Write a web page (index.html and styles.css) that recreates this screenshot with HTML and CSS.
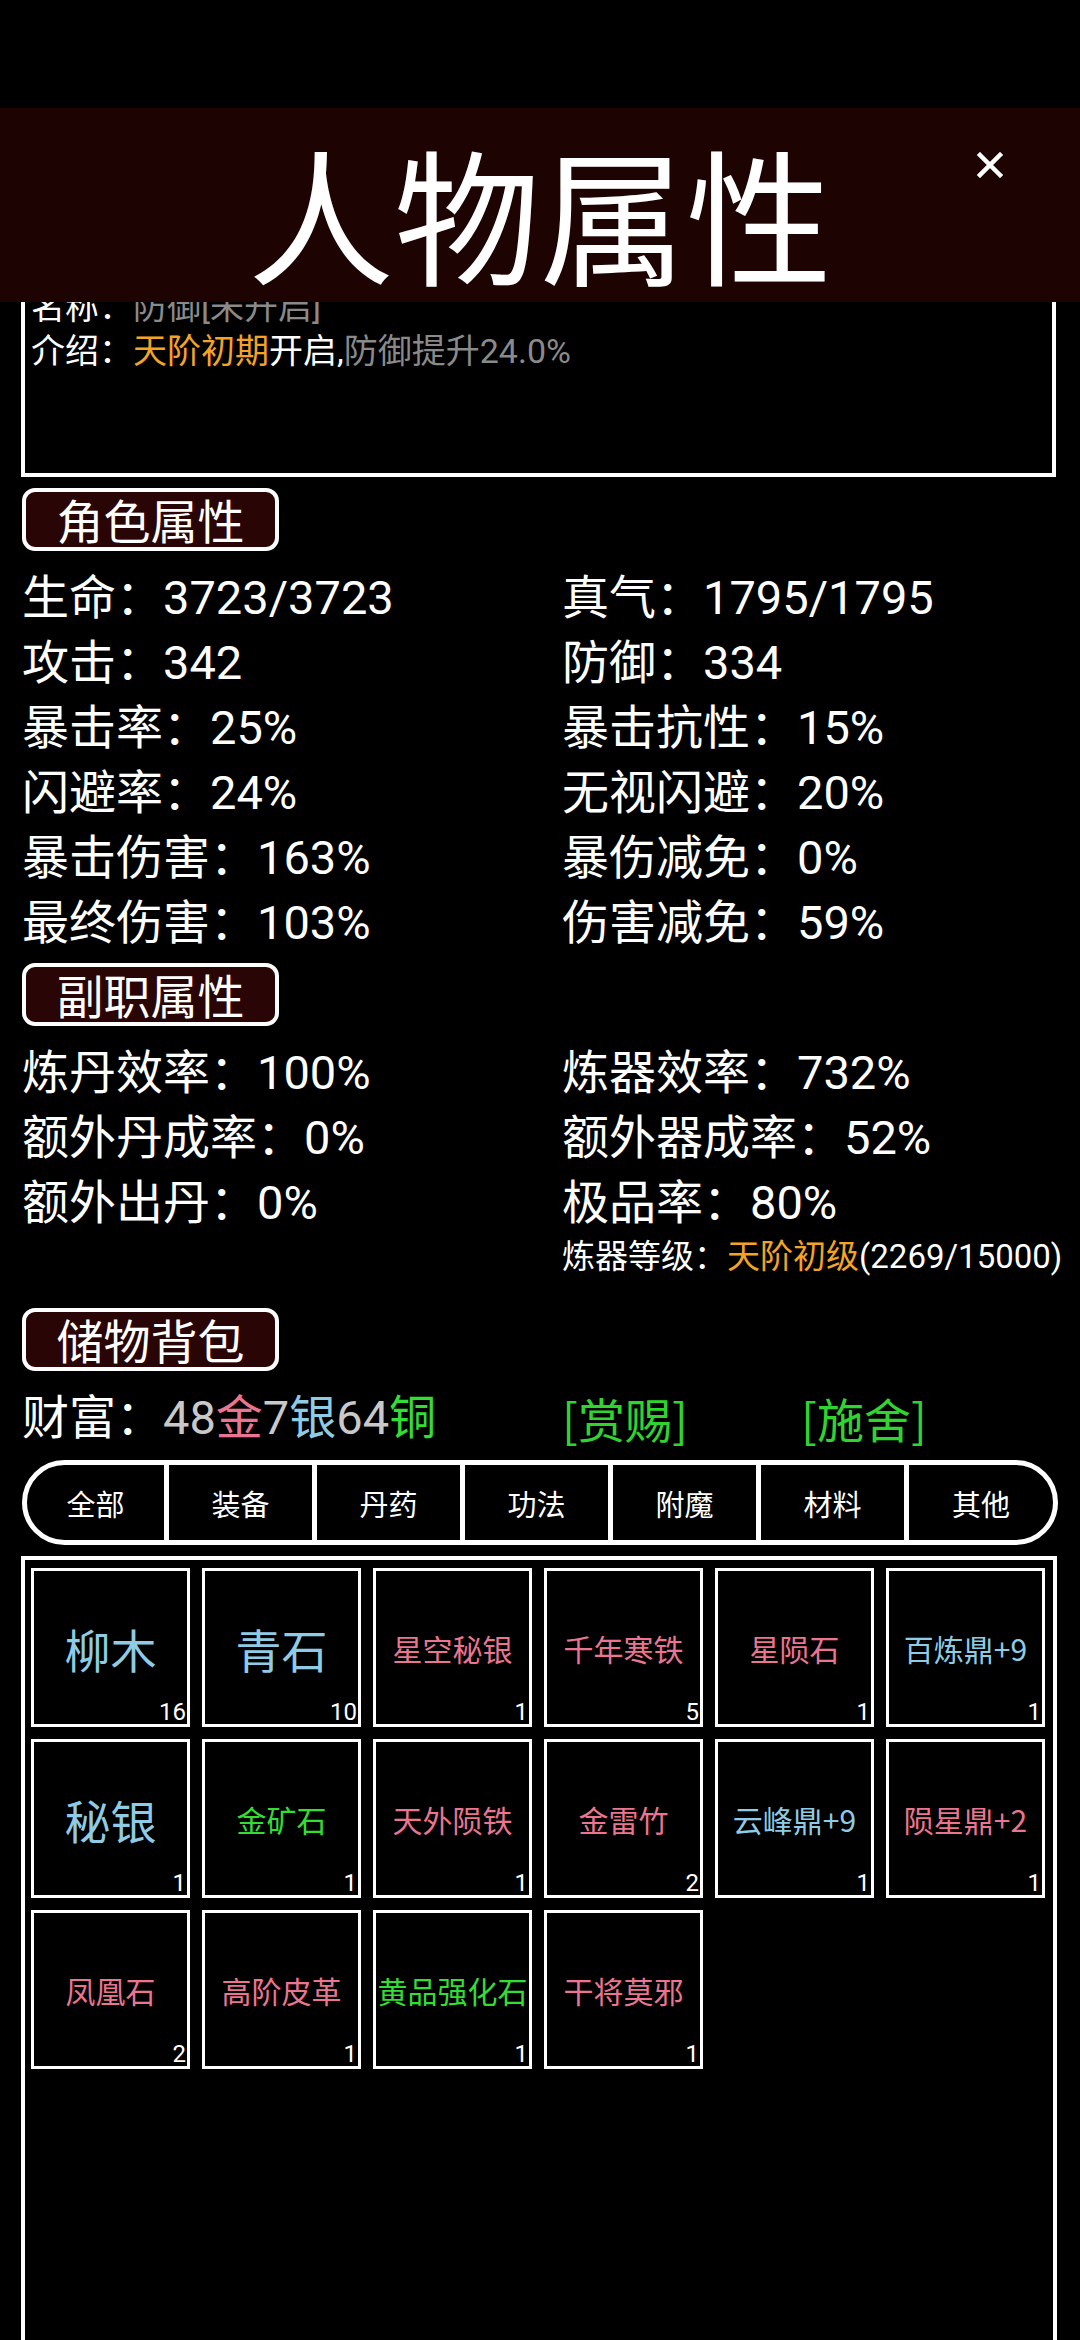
FILE: index.html
```html
<!DOCTYPE html>
<html lang="zh-CN">
<head>
<meta charset="utf-8">
<title>人物属性</title>
<link rel="stylesheet" href="styles.css">
</head>
<body>
<div class="screen">
  <header class="title-bar">
    <h1 class="title">人物属性</h1>
    <button class="close" aria-label="关闭">
      <svg viewBox="0 0 26 26" width="26" height="26"><path d="M3 3 L23 23 M23 3 L3 23" stroke="#fff" stroke-width="4.5" stroke-linecap="square" fill="none"/></svg>
    </button>
  </header>

  <main class="content">
    <section class="info-box">
      <p class="info-line"><span class="c-white">名称：</span><span class="c-grey">防御[未开启]</span></p>
      <p class="info-line"><span class="c-white">介绍：</span><span class="c-orange">天阶初期</span><span class="c-white">开启,</span><span class="c-grey">防御提升24.0%</span></p>
    </section>

    <div class="section-label label-role">角色属性</div>
    <div class="stats stats-role">
      <div>生命：3723/3723</div><div>真气：1795/1795</div>
      <div>攻击：342</div><div>防御：334</div>
      <div>暴击率：25%</div><div>暴击抗性：15%</div>
      <div>闪避率：24%</div><div>无视闪避：20%</div>
      <div>暴击伤害：163%</div><div>暴伤减免：0%</div>
      <div>最终伤害：103%</div><div>伤害减免：59%</div>
    </div>

    <div class="section-label label-sub">副职属性</div>
    <div class="stats stats-sub">
      <div>炼丹效率：100%</div><div>炼器效率：732%</div>
      <div>额外丹成率：0%</div><div>额外器成率：52%</div>
      <div>额外出丹：0%</div><div>极品率：80%</div>
      <div class="level">炼器等级：<span class="c-orange">天阶初级</span>(2269/15000)</div>
    </div>

    <div class="section-label label-bag">储物背包</div>
    <div class="wealth">
      <div>财富：<span class="c-silver">48</span><span class="c-pink">金</span><span class="c-silver">7</span><span class="c-blue">银</span><span class="c-silver">64</span><span class="c-green">铜</span></div>
      <div class="c-btn">[赏赐]</div>
      <div class="c-btn">[施舍]</div>
    </div>

    <nav class="tabs">
      <div class="tab">全部</div>
      <div class="tab">装备</div>
      <div class="tab">丹药</div>
      <div class="tab">功法</div>
      <div class="tab">附魔</div>
      <div class="tab">材料</div>
      <div class="tab">其他</div>
    </nav>

    <section class="bag">
      <div class="grid">
        <div class="cell"><span class="name big c-blue">柳木</span><span class="count">16</span></div>
        <div class="cell"><span class="name big c-blue">青石</span><span class="count">10</span></div>
        <div class="cell"><span class="name c-pink">星空秘银</span><span class="count">1</span></div>
        <div class="cell"><span class="name c-pink">千年寒铁</span><span class="count">5</span></div>
        <div class="cell"><span class="name c-pink">星陨石</span><span class="count">1</span></div>
        <div class="cell"><span class="name c-blue">百炼鼎+9</span><span class="count">1</span></div>
        <div class="cell"><span class="name big c-blue">秘银</span><span class="count">1</span></div>
        <div class="cell"><span class="name c-green">金矿石</span><span class="count">1</span></div>
        <div class="cell"><span class="name c-pink">天外陨铁</span><span class="count">1</span></div>
        <div class="cell"><span class="name c-pink">金雷竹</span><span class="count">2</span></div>
        <div class="cell"><span class="name c-blue">云峰鼎+9</span><span class="count">1</span></div>
        <div class="cell"><span class="name c-pink">陨星鼎+2</span><span class="count">1</span></div>
        <div class="cell"><span class="name c-pink">凤凰石</span><span class="count">2</span></div>
        <div class="cell"><span class="name c-pink">高阶皮革</span><span class="count">1</span></div>
        <div class="cell"><span class="name c-green">黄品强化石</span><span class="count">1</span></div>
        <div class="cell"><span class="name c-pink">干将莫邪</span><span class="count">1</span></div>
      </div>
    </section>
  </main>
</div>
</body>
</html>
```

FILE: styles.css
```css
* { box-sizing: border-box; }

html, body {
  margin: 0;
  padding: 0;
  background: #000;
}

body {
  width: 1080px;
  height: 2340px;
  overflow: hidden;
  font-family: Roboto, "Noto Sans CJK SC", "Noto Sans", sans-serif;
  color: #fff;
}

.screen {
  position: relative;
  width: 1080px;
  height: 2340px;
  overflow: hidden;
  background: #000;
}

/* header overlays scrolled content */
.title-bar {
  position: absolute;
  top: 108px;
  left: 0;
  right: 0;
  height: 194px;
  background: #1e0303;
  z-index: 5;
  display: flex;
  align-items: center;
  justify-content: center;
}

.title {
  margin: 0;
  padding-top: 12px;
  font-family: "Noto Sans CJK SC", sans-serif;
  font-weight: 400;
  font-size: 146px;
  line-height: 1;
  color: #fff;
}

.close {
  position: absolute;
  left: 977px;
  top: 44px;
  width: 26px;
  height: 26px;
  padding: 0;
  border: 0;
  background: transparent;
  display: block;
}
.close svg { display: block; }

.content {
  padding: 270px 0 0 22px;
}

.info-box {
  width: 1035px;
  height: 207px;
  border: 4px solid #fff;
  padding: 11px 0 0 6px;
  margin-left: -1px;
}

.info-line {
  margin: 0;
  font-size: 34px;
  line-height: 44px;
  white-space: nowrap;
}

.c-white { color: #fff; }
.c-grey { color: #8a8a8a; }
.c-orange { color: #f4a425; }
.c-silver { color: #c9c9c9; }
.c-pink { color: #ea7590; }
.c-blue { color: #8fcbe4; }
.c-green { color: #33dd33; }
.c-btn {
  color: #2fd42f;
  font-family: "Noto Sans CJK SC", sans-serif;
}

.section-label {
  width: 257px;
  height: 63px;
  border: 4px solid #fff;
  border-radius: 13px;
  background: #2a0505;
  display: flex;
  align-items: center;
  justify-content: center;
  font-family: "Noto Sans CJK SC", sans-serif;
  font-size: 47px;
  line-height: 1;
  padding-bottom: 2px;
}

.label-role { margin-top: 11px; }
.label-sub { margin-top: 8px; }
.label-bag { margin-top: 29px; }

.stats {
  display: grid;
  grid-template-columns: 540px 1fr;
  font-size: 47px;
  line-height: 65px;
  margin-top: 14px;
  white-space: nowrap;
}

.stats .level {
  grid-column: 2;
  font-size: 33px;
  line-height: 44px;
}

.wealth {
  display: grid;
  grid-template-columns: 540px 239px auto;
  font-size: 47px;
  line-height: 65px;
  margin-top: 14px;
  white-space: nowrap;
}

.tabs {
  margin-top: 10px;
  width: 1036px;
  height: 85px;
  border: 5px solid #fff;
  border-radius: 43px;
  background: #000;
  overflow: hidden;
  display: grid;
  grid-template-columns: 137px repeat(5, 148px) 1fr;
}

.tab {
  display: flex;
  align-items: center;
  justify-content: center;
  font-family: "Noto Sans CJK SC", sans-serif;
  font-size: 29px;
  color: #fff;
  border-left: 5px solid #fff;
}
.tab:first-child { border-left: 0; }

.bag {
  margin-top: 11px;
  margin-left: -1px;
  width: 1036px;
  height: 820px;
  border: 4px solid #fff;
  padding: 8px 0 0 6px;
}

.grid {
  display: grid;
  grid-template-columns: repeat(6, 159px);
  grid-auto-rows: 159px;
  column-gap: 12px;
  row-gap: 12px;
}

.cell {
  position: relative;
  border: 3px solid #fff;
  display: flex;
  align-items: center;
  justify-content: center;
}

.name {
  font-family: "Noto Sans CJK SC", sans-serif;
  font-size: 30px;
  line-height: 1;
  white-space: nowrap;
}

.name.big {
  font-size: 46px;
}

.count {
  position: absolute;
  right: 1px;
  bottom: 0;
  font-size: 24px;
  line-height: 1;
  color: #fff;
}
```
